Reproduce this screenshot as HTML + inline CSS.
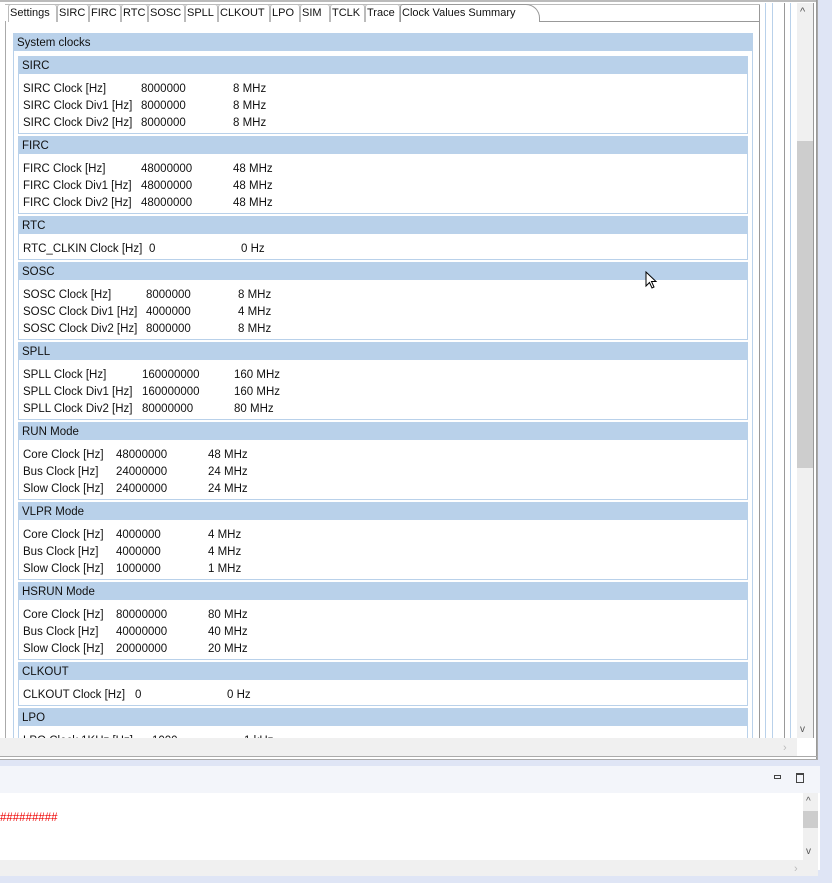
<!DOCTYPE html>
<html><head><style>
*{margin:0;padding:0;box-sizing:border-box}
body{width:832px;height:883px;position:relative;overflow:hidden;background:#fff;font-family:"Liberation Sans",sans-serif;font-size:11.5px;color:#111}
.a{position:absolute}
.t{position:absolute;white-space:nowrap;line-height:14px;margin-top:1px}
.hd{position:absolute;background:#b9d1ea;height:18px}
.bx{position:absolute;border:1px solid #b9d1ea;border-top:none}
.tab{position:absolute;top:4px;height:18px;border:1px solid #bbb;border-bottom:none;border-radius:3px 3px 0 0;padding:0 1px;line-height:17px;background:#fff;white-space:nowrap;font-size:11px;overflow:hidden}
.vl{position:absolute;top:0;width:1px}
</style></head><body>
<div class="a" style="left:0;top:0;width:818px;height:760px;border-right:1px solid #aaa"></div>
<div class="a" style="left:0;top:0;width:816px;height:2px;background:#bbb"></div>
<div class="a" style="left:818px;top:0;width:14px;height:883px;background:#dfe5f5"></div>
<div class="a" style="left:816px;top:0;width:1px;height:760px;background:#999"></div>
<div class="a" style="left:5px;top:21px;width:1px;height:717px;background:#aaa"></div>
<div class="a" style="left:540px;top:21px;width:220px;height:1px;background:#999"></div>
<div class="a" style="left:759px;top:4px;width:1px;height:734px;background:#999"></div>
<div class="a" style="left:5px;top:4px;width:755px;height:1px;background:#bbb"></div>
<div class="tab" style="left:8px;width:49px">Settings</div>
<div class="tab" style="left:57px;width:32px">SIRC</div>
<div class="tab" style="left:89px;width:32px">FIRC</div>
<div class="tab" style="left:121px;width:27px">RTC</div>
<div class="tab" style="left:148px;width:37px">SOSC</div>
<div class="tab" style="left:185px;width:33px">SPLL</div>
<div class="tab" style="left:218px;width:52px">CLKOUT</div>
<div class="tab" style="left:270px;width:30px">LPO</div>
<div class="tab" style="left:300px;width:30px">SIM</div>
<div class="tab" style="left:330px;width:35px">TCLK</div>
<div class="tab" style="left:365px;width:35px">Trace</div>
<div class="tab" style="left:400px;width:140px;border-radius:3px 14px 0 0;border-color:#999">Clock Values Summary</div>
<div class="vl" style="left:752px;top:50px;height:688px;background:#b9d1ea"></div>
<div class="vl" style="left:765px;top:3px;height:735px;background:#b9d1ea"></div>
<div class="vl" style="left:772px;top:3px;height:735px;background:#b9d1ea"></div>
<div class="vl" style="left:784px;top:3px;height:735px;background:#999"></div>
<div class="vl" style="left:790px;top:3px;height:735px;background:#b9d1ea"></div>
<div class="a" style="left:797px;top:3px;width:16px;height:735px;background:#f0f0f0"></div>
<div class="a" style="left:797px;top:141px;width:16px;height:327px;background:#cdcdcd"></div>
<div class="t" style="left:800px;top:4px;font-size:11px;color:#555">&#94;</div>
<div class="t" style="left:800px;top:722px;font-size:10px;color:#555">v</div>
<div class="vl" style="left:813px;top:3px;height:735px;background:#999"></div>
<div class="a" style="left:6px;top:23px;width:753px;height:715px;overflow:hidden">
<div style="position:relative;left:-6px;top:-23px">
<div class="hd" style="left:13px;top:33px;width:740px"></div>
<div class="t" style="left:17px;top:35px">System clocks</div>
<div class="vl" style="left:13px;top:50px;height:700px;background:#b9d1ea"></div>
<div class="hd" style="left:18px;top:56px;width:730px"></div><div class="t" style="left:22px;top:58px">SIRC</div>
<div class="bx" style="left:18px;top:74px;width:730px;height:60px"></div>
<div class="t" style="left:23px;top:81px">SIRC Clock [Hz]</div><div class="t" style="left:141px;top:81px">8000000</div><div class="t" style="left:233px;top:81px">8 MHz</div>
<div class="t" style="left:23px;top:98px">SIRC Clock Div1 [Hz]</div><div class="t" style="left:141px;top:98px">8000000</div><div class="t" style="left:233px;top:98px">8 MHz</div>
<div class="t" style="left:23px;top:115px">SIRC Clock Div2 [Hz]</div><div class="t" style="left:141px;top:115px">8000000</div><div class="t" style="left:233px;top:115px">8 MHz</div>
<div class="hd" style="left:18px;top:136px;width:730px"></div><div class="t" style="left:22px;top:138px">FIRC</div>
<div class="bx" style="left:18px;top:154px;width:730px;height:60px"></div>
<div class="t" style="left:23px;top:161px">FIRC Clock [Hz]</div><div class="t" style="left:141px;top:161px">48000000</div><div class="t" style="left:233px;top:161px">48 MHz</div>
<div class="t" style="left:23px;top:178px">FIRC Clock Div1 [Hz]</div><div class="t" style="left:141px;top:178px">48000000</div><div class="t" style="left:233px;top:178px">48 MHz</div>
<div class="t" style="left:23px;top:195px">FIRC Clock Div2 [Hz]</div><div class="t" style="left:141px;top:195px">48000000</div><div class="t" style="left:233px;top:195px">48 MHz</div>
<div class="hd" style="left:18px;top:216px;width:730px"></div><div class="t" style="left:22px;top:218px">RTC</div>
<div class="bx" style="left:18px;top:234px;width:730px;height:26px"></div>
<div class="t" style="left:23px;top:241px">RTC_CLKIN Clock [Hz]</div><div class="t" style="left:149px;top:241px">0</div><div class="t" style="left:241px;top:241px">0 Hz</div>
<div class="hd" style="left:18px;top:262px;width:730px"></div><div class="t" style="left:22px;top:264px">SOSC</div>
<div class="bx" style="left:18px;top:280px;width:730px;height:60px"></div>
<div class="t" style="left:23px;top:287px">SOSC Clock [Hz]</div><div class="t" style="left:146px;top:287px">8000000</div><div class="t" style="left:238px;top:287px">8 MHz</div>
<div class="t" style="left:23px;top:304px">SOSC Clock Div1 [Hz]</div><div class="t" style="left:146px;top:304px">4000000</div><div class="t" style="left:238px;top:304px">4 MHz</div>
<div class="t" style="left:23px;top:321px">SOSC Clock Div2 [Hz]</div><div class="t" style="left:146px;top:321px">8000000</div><div class="t" style="left:238px;top:321px">8 MHz</div>
<div class="hd" style="left:18px;top:342px;width:730px"></div><div class="t" style="left:22px;top:344px">SPLL</div>
<div class="bx" style="left:18px;top:360px;width:730px;height:60px"></div>
<div class="t" style="left:23px;top:367px">SPLL Clock [Hz]</div><div class="t" style="left:142px;top:367px">160000000</div><div class="t" style="left:234px;top:367px">160 MHz</div>
<div class="t" style="left:23px;top:384px">SPLL Clock Div1 [Hz]</div><div class="t" style="left:142px;top:384px">160000000</div><div class="t" style="left:234px;top:384px">160 MHz</div>
<div class="t" style="left:23px;top:401px">SPLL Clock Div2 [Hz]</div><div class="t" style="left:142px;top:401px">80000000</div><div class="t" style="left:234px;top:401px">80 MHz</div>
<div class="hd" style="left:18px;top:422px;width:730px"></div><div class="t" style="left:22px;top:424px">RUN Mode</div>
<div class="bx" style="left:18px;top:440px;width:730px;height:60px"></div>
<div class="t" style="left:23px;top:447px">Core Clock [Hz]</div><div class="t" style="left:116px;top:447px">48000000</div><div class="t" style="left:208px;top:447px">48 MHz</div>
<div class="t" style="left:23px;top:464px">Bus Clock [Hz]</div><div class="t" style="left:116px;top:464px">24000000</div><div class="t" style="left:208px;top:464px">24 MHz</div>
<div class="t" style="left:23px;top:481px">Slow Clock [Hz]</div><div class="t" style="left:116px;top:481px">24000000</div><div class="t" style="left:208px;top:481px">24 MHz</div>
<div class="hd" style="left:18px;top:502px;width:730px"></div><div class="t" style="left:22px;top:504px">VLPR Mode</div>
<div class="bx" style="left:18px;top:520px;width:730px;height:60px"></div>
<div class="t" style="left:23px;top:527px">Core Clock [Hz]</div><div class="t" style="left:116px;top:527px">4000000</div><div class="t" style="left:208px;top:527px">4 MHz</div>
<div class="t" style="left:23px;top:544px">Bus Clock [Hz]</div><div class="t" style="left:116px;top:544px">4000000</div><div class="t" style="left:208px;top:544px">4 MHz</div>
<div class="t" style="left:23px;top:561px">Slow Clock [Hz]</div><div class="t" style="left:116px;top:561px">1000000</div><div class="t" style="left:208px;top:561px">1 MHz</div>
<div class="hd" style="left:18px;top:582px;width:730px"></div><div class="t" style="left:22px;top:584px">HSRUN Mode</div>
<div class="bx" style="left:18px;top:600px;width:730px;height:60px"></div>
<div class="t" style="left:23px;top:607px">Core Clock [Hz]</div><div class="t" style="left:116px;top:607px">80000000</div><div class="t" style="left:208px;top:607px">80 MHz</div>
<div class="t" style="left:23px;top:624px">Bus Clock [Hz]</div><div class="t" style="left:116px;top:624px">40000000</div><div class="t" style="left:208px;top:624px">40 MHz</div>
<div class="t" style="left:23px;top:641px">Slow Clock [Hz]</div><div class="t" style="left:116px;top:641px">20000000</div><div class="t" style="left:208px;top:641px">20 MHz</div>
<div class="hd" style="left:18px;top:662px;width:730px"></div><div class="t" style="left:22px;top:664px">CLKOUT</div>
<div class="bx" style="left:18px;top:680px;width:730px;height:26px"></div>
<div class="t" style="left:23px;top:687px">CLKOUT Clock [Hz]</div><div class="t" style="left:135px;top:687px">0</div><div class="t" style="left:227px;top:687px">0 Hz</div>
<div class="hd" style="left:18px;top:708px;width:730px"></div><div class="t" style="left:22px;top:710px">LPO</div>
<div class="bx" style="left:18px;top:726px;width:730px;height:40px"></div>
<div class="t" style="left:23px;top:733px">LPO Clock 1KHz [Hz]</div><div class="t" style="left:152px;top:733px">1000</div><div class="t" style="left:244px;top:733px">1 kHz</div>
<svg class="a" style="left:645px;top:271px" width="14" height="20" viewBox="0 0 14 20"><path d="M1 1 L1 15 L4.5 11.5 L7 17 L9 16 L6.5 10.5 L11 10.5 Z" fill="#fff" stroke="#000" stroke-width="1"/></svg>
</div></div>
<div class="a" style="left:0;top:738px;width:797px;height:18px;background:#f0f0f0"></div>
<div class="t" style="left:783px;top:740px;font-size:11px;color:#bbb">&#8250;</div>
<div class="a" style="left:0;top:756px;width:818px;height:1px;background:#aaa"></div>
<div class="a" style="left:0;top:759px;width:818px;height:1px;background:#aaa"></div>
<div class="a" style="left:0;top:760px;width:818px;height:6px;background:#dfe5f5"></div>
<div class="a" style="left:0;top:766px;width:820px;height:27px;background:#f3f5fa"></div>
<div class="a" style="left:774px;top:775px;width:7px;height:4px;border:1px solid #444"></div>
<div class="a" style="left:796px;top:773px;width:8px;height:10px;border:1px solid #444;border-top-width:2px"></div>
<div class="a" style="left:0;top:793px;width:820px;height:77px;background:#fff"></div>
<div class="t" style="left:0;top:810px;color:#e00">#########</div>
<div class="a" style="left:803px;top:793px;width:15px;height:68px;background:#f0f0f0"></div>
<div class="a" style="left:803px;top:811px;width:15px;height:17px;background:#cdcdcd"></div>
<div class="t" style="left:806px;top:794px;font-size:10px;color:#555">&#94;</div>
<div class="t" style="left:806px;top:844px;font-size:10px;color:#555">v</div>
<div class="a" style="left:0;top:860px;width:818px;height:16px;background:#f0f0f0"></div>
<div class="t" style="left:794px;top:861px;font-size:11px;color:#bbb">&#8250;</div>
<div class="a" style="left:0;top:876px;width:832px;height:7px;background:#dfe5f5"></div>
</body></html>
